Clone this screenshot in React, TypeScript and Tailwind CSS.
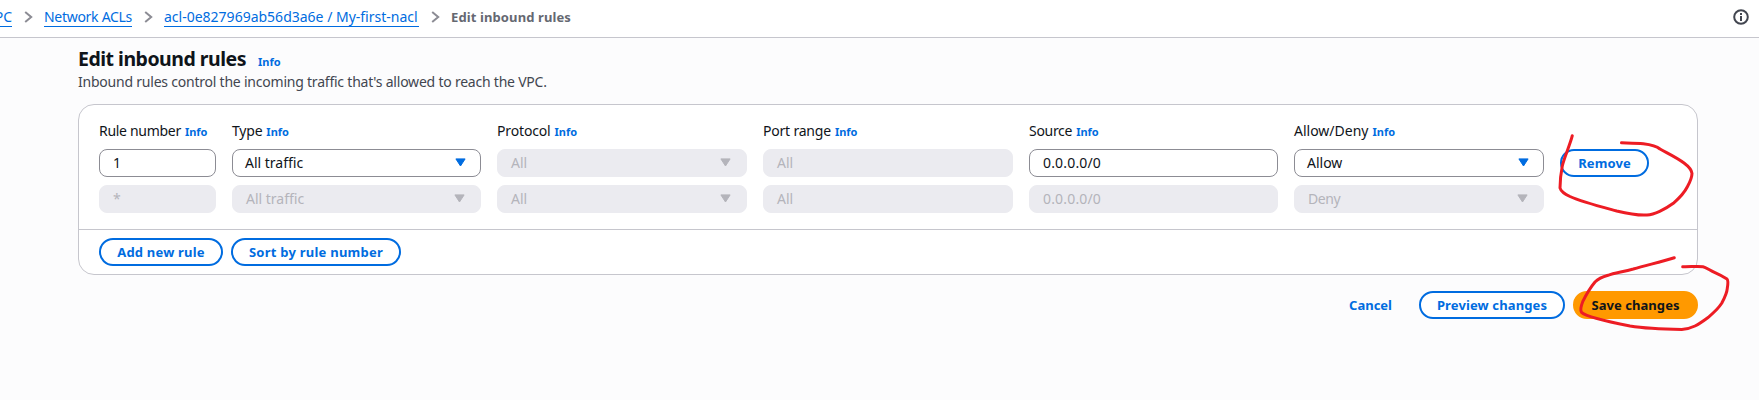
import type { ReactNode } from "react";
import clsx from "clsx";

function Chevron() {
  return (
    <svg className="shrink-0" width="9" height="12" viewBox="0 0 9 12" fill="none" stroke="#8c8c94" strokeWidth="2">
      <path d="M1.2 1 7.2 6 1.2 11" />
    </svg>
  );
}

function Crumb({ children, className }: { children: ReactNode; className?: string }) {
  return (
    <a className={clsx("block h-5 shrink-0 whitespace-nowrap border-b border-[#006ce0] text-[#006ce0]", className)}>
      {children}
    </a>
  );
}

function Info({ className }: { className?: string }) {
  return (
    <a className={clsx("text-[11px] font-bold text-[#006ce0]", className)}>Info</a>
  );
}

function Label({ text, className }: { text: string; className?: string }) {
  return (
    <div className="flex h-5 items-baseline gap-1 whitespace-nowrap">
      <span className={className}>{text}</span>
      <Info />
    </div>
  );
}

function Field({
  value,
  disabled,
  select,
  className,
}: {
  value: string;
  disabled?: boolean;
  select?: boolean;
  className?: string;
}) {
  return (
    <div
      className={clsx(
        "flex h-7 items-center justify-between rounded-lg border pr-[14px]",
        select && !disabled ? "pl-3" : "pl-[13px]",
        disabled ? "border-[#ebebf0] bg-[#ebebf0] text-[#b4b4bb]" : "border-[#8c8c94] bg-white text-[#0f141a]",
        className,
      )}
    >
      <span>{value}</span>
      {select && (
        <svg
          className={clsx("mb-px", disabled ? "mr-px text-[#b4b4bb]" : "text-[#006ce0]")}
          width="11"
          height="9"
          viewBox="0 0 11 9"
          fill="currentColor"
          stroke="currentColor"
          strokeLinejoin="round"
        >
          <path d="M.9.9h9.2L5.5 8z" />
        </svg>
      )}
    </div>
  );
}

function Button({ children, primary, className }: { children: ReactNode; primary?: boolean; className?: string }) {
  return (
    <button
      className={clsx(
        "flex h-7 shrink-0 items-center justify-center whitespace-nowrap rounded-full border-2 text-[13px] font-bold",
        primary ? "border-[#ff9900] bg-[#ff9900] text-[#0f141a]" : "border-[#006ce0] bg-white text-[#006ce0]",
        className,
      )}
    >
      {children}
    </button>
  );
}

function Column({ children }: { children: ReactNode }) {
  return <div className="flex min-w-0 flex-col gap-2">{children}</div>;
}

export default function App() {
  return (
    <div className="relative flex h-[400px] w-[1759px] flex-col overflow-hidden bg-[#fcfcfd] font-['Noto_Sans',sans-serif] text-sm leading-5 text-[#0f141a]">
      <header className="flex h-[38px] items-start justify-between border-b border-[#c6c6cd] bg-white pr-[10px]">
        <nav className="flex items-center pt-[7px]">
          <Crumb className="-ml-[16px] w-7 text-right">VPC</Crumb>
          <div className="flex w-8 justify-center"><Chevron /></div>
          <Crumb className="w-[88px] tracking-[-0.29px]">Network ACLs</Crumb>
          <div className="flex w-8 justify-center"><Chevron /></div>
          <Crumb className="w-[255px]">acl-0e827969ab56d3a6e / My-first-nacl</Crumb>
          <div className="flex w-8 justify-center"><Chevron /></div>
          <span className="h-5 whitespace-nowrap text-[13px] font-bold tracking-[0.11px] text-[#656871]">
            Edit inbound rules
          </span>
        </nav>
        <svg className="mt-[9px]" width="16" height="16" viewBox="0 0 16 16" fill="none" stroke="#424650" strokeWidth="2">
          <circle cx="8" cy="8" r="6.8" />
          <path d="M8 7v5M8 4v2" />
        </svg>
      </header>

      <main className="ml-[78px] flex w-[1620px] flex-col pt-2">
        <div className="flex h-[26px] items-baseline gap-3">
          <h1 className="whitespace-nowrap text-[19.5px] font-bold leading-[26px] tracking-[-0.5px]">Edit inbound rules</h1>
          <Info />
        </div>
        <p className="h-8 tracking-[-0.22px] text-[#424650]">
          Inbound rules control the incoming traffic that's allowed to reach the VPC.
        </p>

        <section className="h-[171px] rounded-2xl border border-[#c6c6cd] bg-white">
          <div className="grid h-[124px] grid-cols-[117px_249px_250px_250px_249px_250px_90px] gap-x-4 pl-5 pt-4">
            <Column>
              <Label text="Rule number" className="tracking-[-0.3px]" />
              <Field value="1" />
              <Field value="*" disabled />
            </Column>
            <Column>
              <Label text="Type" className="tracking-[-0.2px]" />
              <Field value="All traffic" select />
              <Field value="All traffic" select disabled />
            </Column>
            <Column>
              <Label text="Protocol" className="tracking-[-0.15px]" />
              <Field value="All" select disabled />
              <Field value="All" select disabled />
            </Column>
            <Column>
              <Label text="Port range" className="tracking-[-0.2px]" />
              <Field value="All" disabled />
              <Field value="All" disabled />
            </Column>
            <Column>
              <Label text="Source" className="tracking-[-0.3px]" />
              <Field value="0.0.0.0/0" className="tracking-[0.17px]" />
              <Field value="0.0.0.0/0" disabled className="tracking-[0.17px]" />
            </Column>
            <Column>
              <Label text="Allow/Deny" />
              <Field value="Allow" select />
              <Field value="Deny" select disabled className="tracking-[-0.4px]" />
            </Column>
            <div className="pt-7">
              <Button className="w-[89px] tracking-[0.1px]">Remove</Button>
            </div>
          </div>
          <div className="flex gap-2 border-t border-[#c6c6cd] pl-5 pt-2">
            <Button className="w-[124px] tracking-[0.2px]">Add new rule</Button>
            <Button className="w-[170px] tracking-[0.24px]">Sort by rule number</Button>
          </div>
        </section>

        <div className="flex justify-end gap-2 pt-4">
          <button className="mr-[19px] text-[13px] font-bold text-[#006ce0]">Cancel</button>
          <Button className="w-[146px] tracking-[0.12px]">Preview changes</Button>
          <Button primary className="w-[125px] tracking-[0.06px]">Save changes</Button>
        </div>
      </main>

      <svg
        className="pointer-events-none absolute inset-0"
        width="1759"
        height="400"
        viewBox="0 0 1759 400"
        fill="none"
        stroke="#ed1c24"
        strokeWidth="3"
        strokeLinecap="round"
        strokeLinejoin="round"
      >
        <path d="M1572.3 135.7C1570 145 1564 158 1562.3 166C1560.5 175 1560 181 1560 188C1561 192 1565 194 1570 196.5C1582 202 1600 206.5 1616.7 211C1627 213.5 1640 215.5 1647 215C1654 214.5 1665 209.5 1673.3 203.3C1680 197.5 1685 191.5 1687.5 186.5C1690 182 1692 177 1692 173.3C1691.5 169 1688 166 1684 163C1676 157 1667 153 1660 149C1656 145.5 1650 144.5 1643.3 143.7C1637 143 1629 143 1621.5 142.8" />
        <path d="M1674.3 257.8C1661 262 1647 265 1633.3 269C1622 272 1614 273 1608 275.3C1602 277 1598 279 1595 282C1590 288 1585 297 1582.7 301.7C1581 306 1580 310 1581.5 312.3C1585 315.5 1605 321 1630 326C1645 328.5 1665 329.2 1681.7 329.4C1687 329 1691 328 1695 326C1700 323.5 1704 320.5 1708.3 317.3C1714 312.5 1719 307.5 1721.7 303.3C1724.5 298 1727 292 1727.3 288.3C1728 284 1728.5 280.5 1727 279C1723 276.5 1719 274.5 1715 272.7C1710 270.5 1706 267.3 1703 266.7C1697 266 1689 267 1682.7 266.7" />
      </svg>
    </div>
  );
}
